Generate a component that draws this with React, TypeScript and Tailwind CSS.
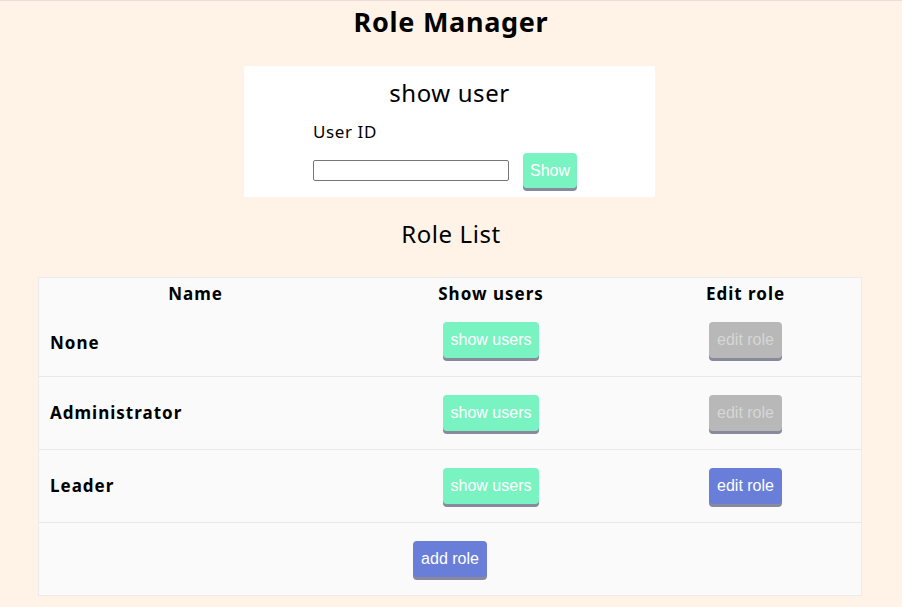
import React from "react";

const roles = [
  { name: "None", editable: false },
  { name: "Administrator", editable: false },
  { name: "Leader", editable: true },
];

function Btn({ label, tone }: { label: string; tone: "green" | "gray" | "blue" }) {
  const color =
    tone === "green"
      ? "bg-[#7af3c2] text-white"
      : tone === "gray"
      ? "bg-[#b8b8b8] text-[#d6d6d6]"
      : "bg-[#687ed9] text-white";
  return (
    <button
      className={`h-[36px] px-[8px] rounded-[4px] shadow-[0_3px_0_#868a9c] text-[16px] leading-none ${color}`}
      style={{ fontFamily: '"Liberation Sans", Arial, sans-serif' }}
    >
      {label}
    </button>
  );
}

export default function App() {
  return (
    <div
      className="min-h-[607px] bg-[#fff3e8] border-t border-[#f3d8de] text-black"
      style={{ fontFamily: '"Noto Sans", sans-serif' }}
    >
      <h1 className="text-center text-[27px] font-bold leading-[38px] pt-[2px] tracking-[0.7px]">Role Manager</h1>

      <div className="ml-[244px] mt-[25px] w-[411px] h-[131px] bg-white pt-[10px]">
        <div className="text-center text-[24px] leading-[34px] tracking-[0.6px]">show user</div>
        <div className="pl-[69px] mt-[9px] text-[17px] leading-[26px] tracking-[0.6px]">User ID</div>
        <div className="pl-[69px] mt-[8px] flex items-start gap-[14px]">
          <input className="mt-[7px] w-[196px] h-[21px] border border-[#767676] rounded-[2px] bg-white" />
          <button
            className="h-[35px] px-[7px] rounded-[4px] bg-[#7af3c2] text-white text-[16px] leading-none shadow-[0_3px_0_#868a9c]"
            style={{ fontFamily: '"Liberation Sans", Arial, sans-serif' }}
          >
            Show
          </button>
        </div>
      </div>

      <div className="text-center text-[24px] leading-[34px] mt-[20px] tracking-[0.6px]">Role List</div>

      <div className="ml-[38px] mt-[26px] w-[824px] border border-[#ebebeb] bg-[#fafafa]">
        <div className="grid grid-cols-[313px_278px_231px] h-[32px] items-center text-[17px] font-bold tracking-[1px]">
          <div className="text-center">Name</div>
          <div className="text-center">Show users</div>
          <div className="text-center">Edit role</div>
        </div>
        {roles.map((r, i) => (
          <div
            key={r.name}
            className={`grid grid-cols-[313px_278px_231px] items-center border-b border-[#e8e8e8] ${
              i === 0 ? "h-[67px]" : "h-[73px]"
            }`}
          >
            <div className="pl-[11px] text-[17px] font-bold tracking-[1px]">{r.name}</div>
            <div className={`flex justify-center ${i === 0 ? "-mt-[6px]" : ""}`}>
              <Btn label="show users" tone="green" />
            </div>
            <div className={`flex justify-center ${i === 0 ? "-mt-[6px]" : ""}`}>
              <Btn label="edit role" tone={r.editable ? "blue" : "gray"} />
            </div>
          </div>
        ))}
        <div className="h-[72px] flex items-center justify-center">
          <Btn label="add role" tone="blue" />
        </div>
      </div>
    </div>
  );
}
